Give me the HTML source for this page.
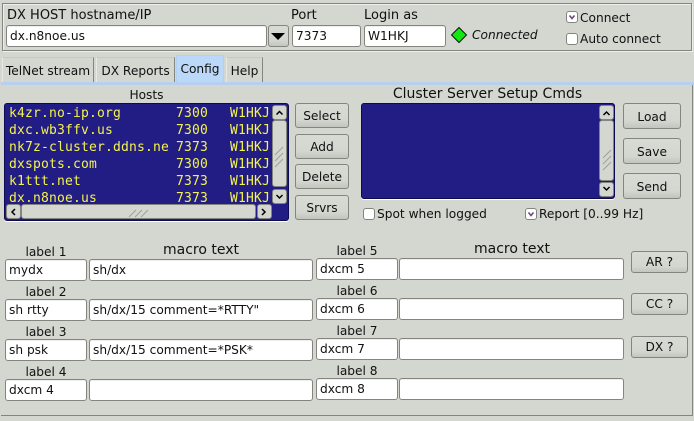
<!DOCTYPE html>
<html><head><meta charset="utf-8"><style>
*{box-sizing:border-box}
html,body{margin:0;padding:0}
body{width:694px;height:421px;background:#d4d6d0;position:relative;overflow:hidden;font-family:"DejaVu Sans",sans-serif;font-size:12.2px;color:#111}
div{position:absolute;white-space:pre}
.t{line-height:18px;height:18px}
.c{text-align:center}
.i{background:#fff;border:1px solid #85857f;border-radius:3px;box-shadow:inset 0 1px 0 #eee;line-height:21px;padding-left:3px;color:#111}
.b{background:linear-gradient(#d8dad4 0,#d4d6d0 70%,#c2c4be 100%);border:1px solid #85857f;border-radius:3px;text-align:center;color:#111}
.frame{border:1px solid #85857f;box-shadow:inset 1px 1px 0 #eee,1px 1px 0 #eee}
.tab{background:#d4d6d0;border:1px solid #a8a8a2;border-bottom:0;border-top-color:#c8c8c2;border-left-color:#e8e8e4;border-right-color:#85857f;text-align:center;line-height:27px}
.blue{background:#221c85;border:1px solid #0c0a50;border-radius:3px;box-shadow:0 1px 0 #fff}
.sb{background:#d4d6d0;border:1px solid #85857f;border-radius:3px}
.m{font-family:"DejaVu Sans Mono",monospace;font-size:13px;letter-spacing:.174px;color:#f4f44a;line-height:19px;height:19px}
.cb{background:#fff;border:1px solid #85857f;border-radius:3px;width:12px;height:12px}
svg{position:absolute;overflow:visible}
</style></head><body>
<div class="frame" style="left:2px;top:3px;width:690px;height:48px"></div>
<div class="t" style="left:7px;top:7px;font-size:13px">DX HOST hostname/IP</div>
<div class="t" style="left:291px;top:7px;font-size:13px">Port</div>
<div class="t" style="left:364px;top:7px;font-size:13px">Login as</div>
<div class="i" style="left:6px;top:25px;width:261px;height:22px">dx.n8noe.us</div>
<div class="b" style="left:268px;top:25px;width:21px;height:22px"></div>
<svg style="left:268px;top:25px" width="21" height="22"><path d="M3 8h14l-7 7z" fill="#000"/></svg>
<div class="i" style="left:292px;top:25px;width:69px;height:22px">7373</div>
<div class="i" style="left:364px;top:25px;width:82px;height:22px">W1HKJ</div>
<svg style="left:451px;top:27px" width="17" height="17"><path d="M8 .5L15.500 8 8 15.500 .5 8z" fill="#10e810" stroke="#111" stroke-width="1"/></svg>
<div class="t" style="left:472px;top:26px;font-style:italic">Connected</div>
<div class="cb" style="left:566px;top:11px"></div>
<svg style="left:566px;top:11px" width="12" height="12"><path d="M3.500 4.500L6 7.500 8.500 4.500" fill="none" stroke="#6a4a80" stroke-width="1.600"/></svg>
<div class="t" style="left:580px;top:9px">Connect</div>
<div class="cb" style="left:566px;top:33px"></div>
<div class="t" style="left:580px;top:30px">Auto connect</div>

<div class="tab" style="left:2px;top:57px;width:92px;height:25px">TelNet stream</div>
<div class="tab" style="left:96px;top:57px;width:79px;height:25px">DX Reports</div>
<div class="tab" style="left:176px;top:55px;width:48px;height:28px;background:#bcd8f8;border-color:#b4d0f0;line-height:26px">Config</div>
<div class="tab" style="left:226px;top:57px;width:37px;height:25px">Help</div>
<div style="left:1px;top:82px;width:693px;height:3px;background:#b8d0f0"></div>
<div style="left:692px;top:85px;width:1px;height:331px;background:#85857f"></div>
<div style="left:1px;top:415px;width:692px;height:1px;background:#85857f"></div>

<div class="t c" style="left:4px;top:86px;width:285px">Hosts</div>
<div class="blue" style="left:4px;top:103px;width:285px;height:118px"></div>
<div class="m" style="left:9px;top:104px">k4zr.no-ip.org</div><div class="m" style="left:176px;top:104px">7300</div><div class="m" style="left:230px;top:104px">W1HKJ</div>
<div class="m" style="left:9px;top:121px">dxc.wb3ffv.us</div><div class="m" style="left:176px;top:121px">7300</div><div class="m" style="left:230px;top:121px">W1HKJ</div>
<div class="m" style="left:9px;top:138px">nk7z-cluster.ddns.ne</div><div class="m" style="left:176px;top:138px">7373</div><div class="m" style="left:230px;top:138px">W1HKJ</div>
<div class="m" style="left:9px;top:155px">dxspots.com</div><div class="m" style="left:176px;top:155px">7300</div><div class="m" style="left:230px;top:155px">W1HKJ</div>
<div class="m" style="left:9px;top:172px">k1ttt.net</div><div class="m" style="left:176px;top:172px">7373</div><div class="m" style="left:230px;top:172px">W1HKJ</div>
<div class="m" style="left:9px;top:189px">dx.n8noe.us</div><div class="m" style="left:176px;top:189px">7373</div><div class="m" style="left:230px;top:189px">W1HKJ</div>
<div class="sb" style="left:272px;top:105px;width:15px;height:15px"></div>
<div class="sb" style="left:272px;top:120px;width:15px;height:67px"></div>
<div class="sb" style="left:272px;top:189px;width:15px;height:15px"></div>
<div class="sb" style="left:6px;top:204px;width:15px;height:15px"></div>
<div class="sb" style="left:21px;top:204px;width:235px;height:15px"></div>
<div class="sb" style="left:257px;top:204px;width:15px;height:15px"></div>
<svg style="left:0;top:0" width="694" height="421">
<path d="M276.500 114.500L279.500 111.500 282.500 114.500M276.500 195L279.500 198 282.500 195M15 209L12 212 15 215M262 209L265 212 262 215" fill="none" stroke="#000" stroke-width="1.500"/>
<path d="M275 155l8-8M275 161l8-8M275 167l8-8M129 217l7-7M135 217l7-7M141 217l7-7" fill="none" stroke="#a0a09a"/>
</svg>

<div class="b" style="left:295px;top:103px;width:54px;height:25px;line-height:25px">Select</div>
<div class="b" style="left:295px;top:134px;width:54px;height:25px;line-height:25px">Add</div>
<div class="b" style="left:295px;top:164px;width:54px;height:25px;line-height:25px">Delete</div>
<div class="b" style="left:295px;top:195px;width:54px;height:25px;line-height:25px">Srvrs</div>

<div class="t c" style="left:361px;top:85px;width:253px;font-size:14px">Cluster Server Setup Cmds</div>
<div class="blue" style="left:361px;top:103px;width:254px;height:96px"></div>
<div class="sb" style="left:599px;top:105px;width:15px;height:15px"></div>
<div class="sb" style="left:599px;top:120px;width:15px;height:61px"></div>
<div class="sb" style="left:599px;top:182px;width:15px;height:15px"></div>
<svg style="left:0;top:0" width="694" height="421">
<path d="M603 158l8-8M603 164l8-8M603 170l8-8" fill="none" stroke="#a0a09a"/>
<path d="M603.500 115L606.500 112 609.500 115M603.500 187L606.500 190 609.500 187" fill="none" stroke="#000" stroke-width="1.500"/>
</svg>
<div class="b" style="left:623px;top:103px;width:58px;height:26px;line-height:26px">Load</div>
<div class="b" style="left:623px;top:138px;width:58px;height:26px;line-height:26px">Save</div>
<div class="b" style="left:623px;top:173px;width:58px;height:26px;line-height:26px">Send</div>
<div class="cb" style="left:363px;top:208px"></div>
<div class="t" style="left:377px;top:205px">Spot when logged</div>
<div class="cb" style="left:525px;top:208px"></div>
<svg style="left:525px;top:208px" width="12" height="12"><path d="M3.500 4.500L6 7.500 8.500 4.500" fill="none" stroke="#6a4a80" stroke-width="1.600"/></svg>
<div class="t" style="left:539px;top:205px">Report [0..99 Hz]</div>

<div class="t c" style="left:5px;top:243px;width:82px">label 1</div>
<div class="t c" style="left:89px;top:241px;width:224px;font-size:14px">macro text</div>
<div class="i" style="left:5px;top:259px;width:82px;height:22px">mydx</div>
<div class="i" style="left:89px;top:259px;width:224px;height:22px">sh/dx</div>
<div class="t c" style="left:5px;top:283px;width:82px">label 2</div>
<div class="i" style="left:5px;top:299px;width:82px;height:22px">sh rtty</div>
<div class="i" style="left:89px;top:299px;width:224px;height:22px">sh/dx/15 comment=*RTTY"</div>
<div class="t c" style="left:5px;top:323px;width:82px">label 3</div>
<div class="i" style="left:5px;top:339px;width:82px;height:22px">sh psk</div>
<div class="i" style="left:89px;top:339px;width:224px;height:22px">sh/dx/15 comment=*PSK*</div>
<div class="t c" style="left:5px;top:363px;width:82px">label 4</div>
<div class="i" style="left:5px;top:379px;width:82px;height:22px">dxcm 4</div>
<div class="i" style="left:89px;top:379px;width:224px;height:22px"></div>

<div class="t c" style="left:316px;top:242px;width:82px">label 5</div>
<div class="t c" style="left:400px;top:240px;width:224px;font-size:14px">macro text</div>
<div class="i" style="left:316px;top:258px;width:82px;height:22px">dxcm 5</div>
<div class="i" style="left:399px;top:258px;width:225px;height:22px"></div>
<div class="t c" style="left:316px;top:282px;width:82px">label 6</div>
<div class="i" style="left:316px;top:298px;width:82px;height:22px">dxcm 6</div>
<div class="i" style="left:399px;top:298px;width:225px;height:22px"></div>
<div class="t c" style="left:316px;top:322px;width:82px">label 7</div>
<div class="i" style="left:316px;top:338px;width:82px;height:22px">dxcm 7</div>
<div class="i" style="left:399px;top:338px;width:225px;height:22px"></div>
<div class="t c" style="left:316px;top:362px;width:82px">label 8</div>
<div class="i" style="left:316px;top:378px;width:82px;height:22px">dxcm 8</div>
<div class="i" style="left:399px;top:378px;width:225px;height:22px"></div>

<div class="b" style="left:631px;top:251px;width:57px;height:22px;line-height:20px">AR ?</div>
<div class="b" style="left:631px;top:293px;width:57px;height:22px;line-height:20px">CC ?</div>
<div class="b" style="left:631px;top:336px;width:57px;height:22px;line-height:20px">DX ?</div>
</body></html>
